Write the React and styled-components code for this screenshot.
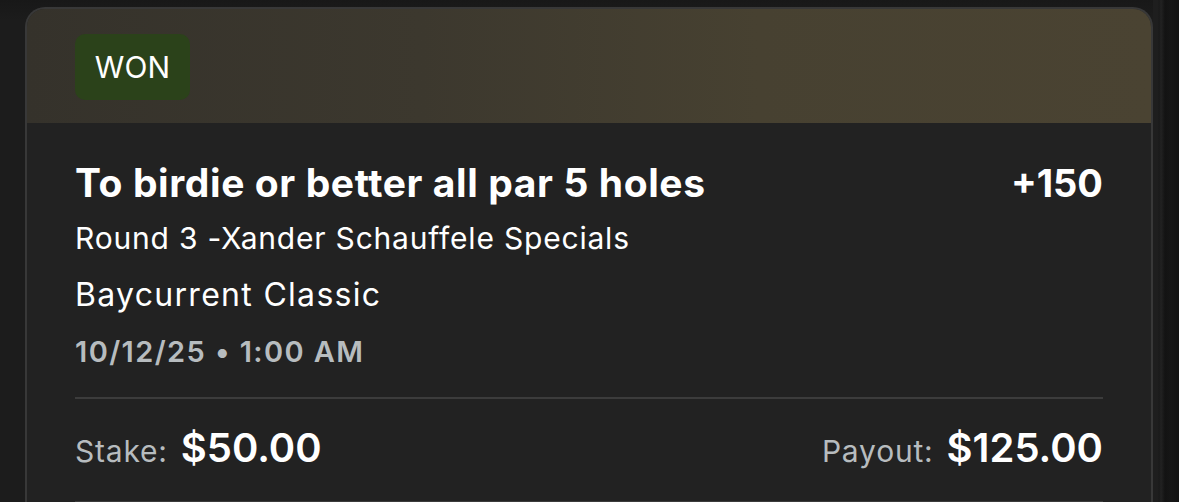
import React from 'react'
import styled, { createGlobalStyle } from 'styled-components'

const GlobalStyle = createGlobalStyle`
  html, body {
    margin: 0;
    padding: 0;
    background: #1b1b1b;
    overflow: hidden;
  }
  body {
    font-family: Inter, "Liberation Sans", Arial, sans-serif;
    -webkit-font-smoothing: antialiased;
  }
`

const bet = {
  status: 'WON',
  title: 'To birdie or better all par 5 holes',
  odds: '+150',
  market: 'Round 3 -Xander Schauffele Specials',
  event: 'Baycurrent Classic',
  date: '10/12/25',
  time: '1:00 AM',
  stake: '$50.00',
  payout: '$125.00',
}

const App = () => {
  return (
    <>
      <GlobalStyle />
      <Page>
        <Card>
          <Header>
            <Badge>{bet.status}</Badge>
          </Header>
          <Body>
            <TitleRow>
              <Title>{bet.title}</Title>
              <Odds>{bet.odds}</Odds>
            </TitleRow>
            <Market>{bet.market}</Market>
            <Event>{bet.event}</Event>
            <When>{bet.date} • {bet.time}</When>
            <Divider />
            <Amounts>
              <Amount>
                <Label>Stake:</Label>
                <Value>{bet.stake}</Value>
              </Amount>
              <Amount>
                <Label>Payout:</Label>
                <Value>{bet.payout}</Value>
              </Amount>
            </Amounts>
            <Divider />
          </Body>
        </Card>
        <Gutter />
      </Page>
    </>
  )
}

const Page = styled.div`
  display: flex;
  height: 502px;
  padding: 7px 0 0 25px;
  box-sizing: border-box;
  background: linear-gradient(#181818, #1c1c1c 20px);
`

const Card = styled.div`
  width: 1128px;
  flex-shrink: 0;
  box-sizing: border-box;
  border: 2px solid #383838;
  border-bottom: none;
  border-radius: 20px 20px 0 0;
  background: #222222;
  overflow: hidden;
`

const Header = styled.div`
  height: 114px;
  box-sizing: border-box;
  padding: 25px 48px 0;
  background: linear-gradient(90deg, #35322b 0%, #3c382e 35%, #474131 65%, #4a4332 100%);
`

const Badge = styled.div`
  display: inline-flex;
  align-items: center;
  justify-content: center;
  width: 115px;
  height: 66px;
  border-radius: 10px;
  background: #2b421a;
  color: #ffffff;
  font-size: 30px;
  font-weight: 400;
  letter-spacing: 0.2px;
`

const Body = styled.div`
  padding: 38px 48px 0;
  color: #ffffff;
`

const TitleRow = styled.div`
  display: flex;
  justify-content: space-between;
  align-items: baseline;
`

const Title = styled.div`
  font-size: 39px;
  line-height: 44px;
  font-weight: 700;
  letter-spacing: 0.6px;
`

const Odds = styled(Title)`
  font-size: 38px;
  letter-spacing: 0;
`

const Market = styled.div`
  margin-top: 15px;
  font-size: 30px;
  line-height: 36px;
  font-weight: 400;
  letter-spacing: 0.8px;
`

const Event = styled(Market)`
  margin-top: 21px;
  font-size: 32px;
  letter-spacing: 1.3px;
`

const When = styled.div`
  margin-top: 21px;
  font-size: 29px;
  line-height: 36px;
  font-weight: 600;
  letter-spacing: 1.4px;
  color: #b7bcbf;
`

const Divider = styled.div`
  height: 2px;
  margin-top: 27px;
  background: #3c3c3c;
`

const Amounts = styled.div`
  display: flex;
  justify-content: space-between;
  align-items: baseline;
  margin-top: 25px;
  & + ${Divider} {
    margin-top: 26px;
  }
`

const Amount = styled.div`
  display: flex;
  align-items: baseline;
  gap: 13px;
`

const Label = styled.span`
  font-size: 30px;
  line-height: 48px;
  letter-spacing: 0.8px;
  color: #b7bcbf;
`

const Value = styled.span`
  font-size: 40px;
  line-height: 48px;
  font-weight: 600;
  color: #ffffff;
`

const Gutter = styled.div`
  flex: 1;
  margin-top: -7px;
  background: linear-gradient(90deg, #1e1e1e 0, #1e1e1e 5px, #191919 6px, #222 8px, #131313 12px, #161616 18px, #121212 100%);
`

export default App
